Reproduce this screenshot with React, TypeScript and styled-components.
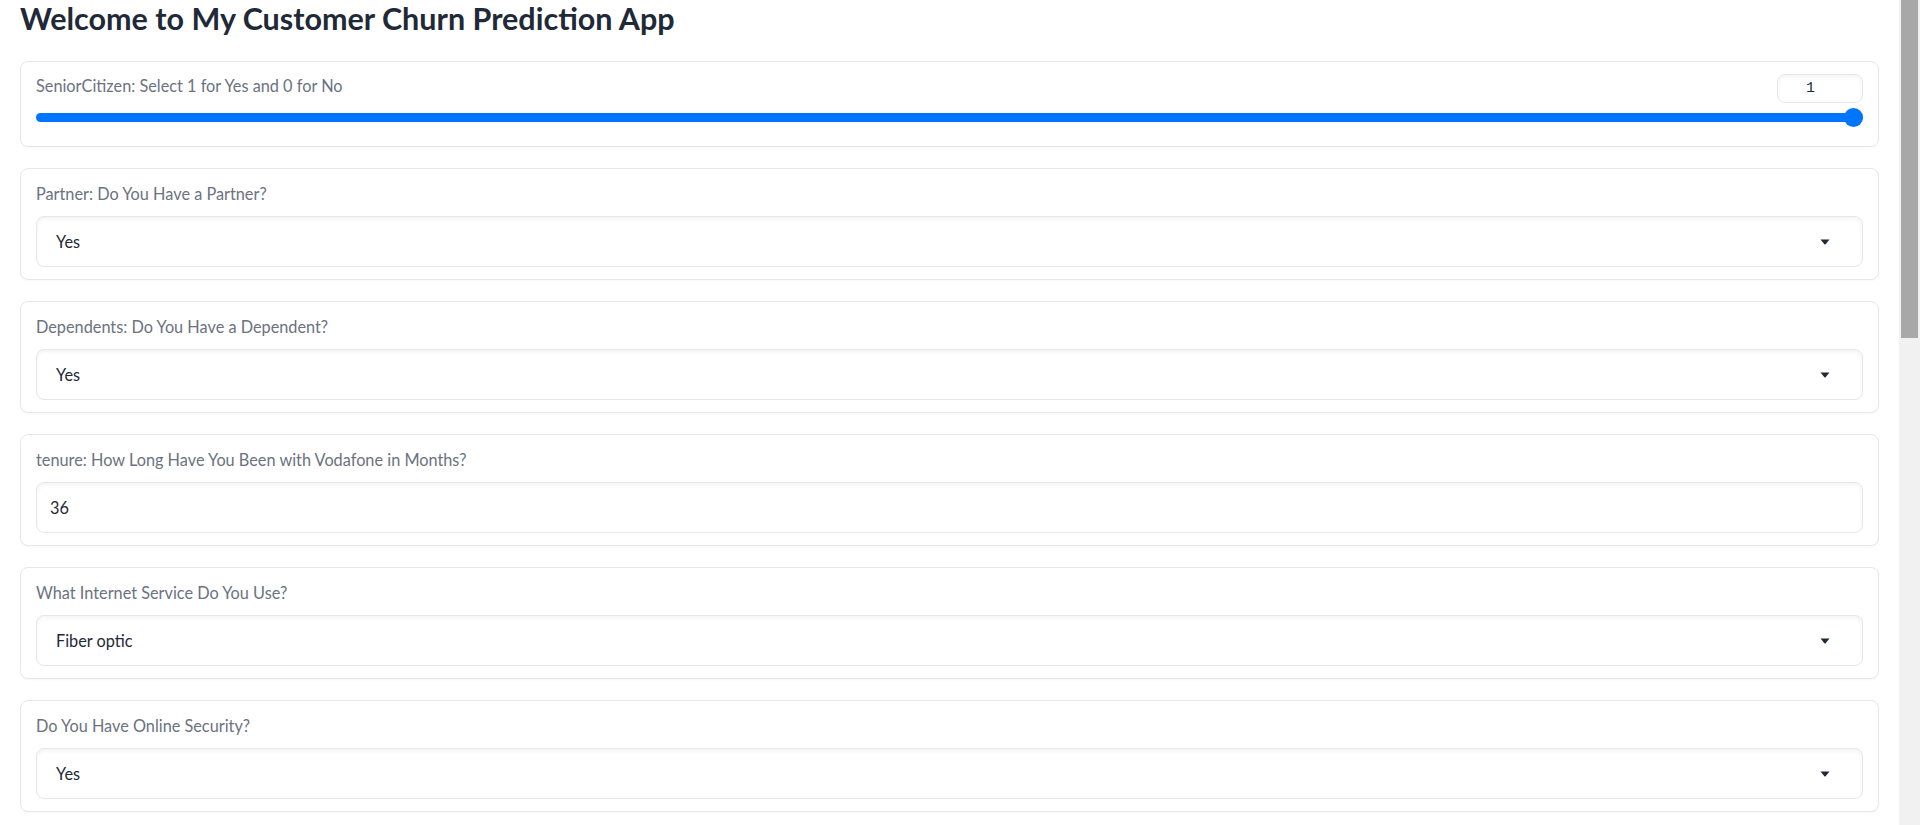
import styled, { createGlobalStyle } from "styled-components";

const GlobalStyle = createGlobalStyle`
  html, body {
    margin: 0;
    padding: 0;
    height: 100%;
    overflow: hidden;
    background: #ffffff;
  }
  #root {
    height: 100%;
  }
`;

const Shell = styled.div`
  display: flex;
  height: 100vh;
  font-family: Lato, "Noto Sans", sans-serif;
  color: #1f2937;
`;

const Main = styled.main`
  flex: 1;
  overflow: hidden;
  padding: 0 20px;
`;

// the page scrollbar, as it shows in the screenshot
const ScrollTrack = styled.div`
  width: 21px;
  flex-shrink: 0;
  background: #f1f1f1;
  padding: 0 2px;
  box-sizing: border-box;
`;

const ScrollThumb = styled.div`
  height: 338px;
  background: #a8a8a8;
`;

const Title = styled.h1`
  margin: 0;
  height: 40px;
  font-size: 30.5px;
  line-height: 36px;
  font-weight: 700;
  color: #1f2937;
`;

const Column = styled.div`
  display: flex;
  flex-direction: column;
  gap: 21px;
  margin-top: 21px;
`;

const Card = styled.div<{ $compact?: boolean }>`
  border: 1px solid #e5e7eb;
  border-radius: 8px;
  background: #ffffff;
  box-shadow: 0 1px 2px rgba(0, 0, 0, 0.03);
  padding: ${(p) => (p.$compact ? "12px 15px 19px" : "15px 15px 12px")};
  display: flex;
  flex-direction: column;
  gap: 12px;
`;

const Label = styled.span`
  font-size: 16.3px;
  line-height: 20px;
  color: #6b7280;
`;

const SliderHead = styled.div`
  display: flex;
  justify-content: space-between;
  align-items: flex-start;
  ${Label} {
    margin-top: 2px;
  }
`;

const NumberBox = styled.div`
  width: 86px;
  height: 29px;
  box-sizing: border-box;
  border: 1px solid #e5e7eb;
  border-radius: 8px;
  box-shadow: inset 0 2px 4px rgba(0, 0, 0, 0.05);
  padding-right: 19px;
  display: flex;
  align-items: center;
  justify-content: center;
  font-family: "Liberation Mono", "DejaVu Sans Mono", monospace;
  font-size: 15px;
  color: #1f2937;
`;

const Range = styled.input`
  -webkit-appearance: none;
  appearance: none;
  width: 100%;
  height: 19px;
  margin: -7px 0 0;
  background: transparent;
  &::-webkit-slider-runnable-track {
    height: 9px;
    border-radius: 5px;
    background: #0075ff;
  }
  &::-webkit-slider-thumb {
    -webkit-appearance: none;
    width: 19px;
    height: 19px;
    margin-top: -5px;
    border-radius: 50%;
    background: #0075ff;
  }
`;

const Field = styled.div<{ $select?: boolean }>`
  height: 51px;
  box-sizing: border-box;
  border: 1px solid #e5e7eb;
  border-radius: 8px;
  background: #ffffff;
  box-shadow: inset 0 2px 4px rgba(0, 0, 0, 0.05);
  display: flex;
  align-items: center;
  justify-content: space-between;
  padding: ${(p) => (p.$select ? "0 32px 0 19px" : "0 13px")};
  font-size: 16.3px;
  color: #1f2937;
`;

function Caret() {
  return (
    <svg width="10" height="6" viewBox="0 0 10 6">
      <path d="M0.5 0.5 H9.5 L5.6 5.2 Q5 5.8 4.4 5.2 Z" fill="#1f2937" />
    </svg>
  );
}

const fields = [
  { label: "Partner: Do You Have a Partner?", value: "Yes" },
  { label: "Dependents: Do You Have a Dependent?", value: "Yes" },
  { label: "tenure: How Long Have You Been with Vodafone in Months?", value: "36", text: true },
  { label: "What Internet Service Do You Use?", value: "Fiber optic" },
  { label: "Do You Have Online Security?", value: "Yes" },
];

export default function App() {
  return (
    <>
      <GlobalStyle />
      <Shell>
        <Main>
          <Title>Welcome to My Customer Churn Prediction App</Title>
          <Column>
            <Card $compact>
              <SliderHead>
                <Label>SeniorCitizen: Select 1 for Yes and 0 for No</Label>
                <NumberBox>1</NumberBox>
              </SliderHead>
              <Range type="range" min={0} max={1} step={1} defaultValue={1} />
            </Card>
            {fields.map((f) => (
              <Card key={f.label}>
                <Label>{f.label}</Label>
                <Field $select={!f.text}>
                  <span>{f.value}</span>
                  {!f.text && <Caret />}
                </Field>
              </Card>
            ))}
          </Column>
        </Main>
        <ScrollTrack>
          <ScrollThumb />
        </ScrollTrack>
      </Shell>
    </>
  );
}
